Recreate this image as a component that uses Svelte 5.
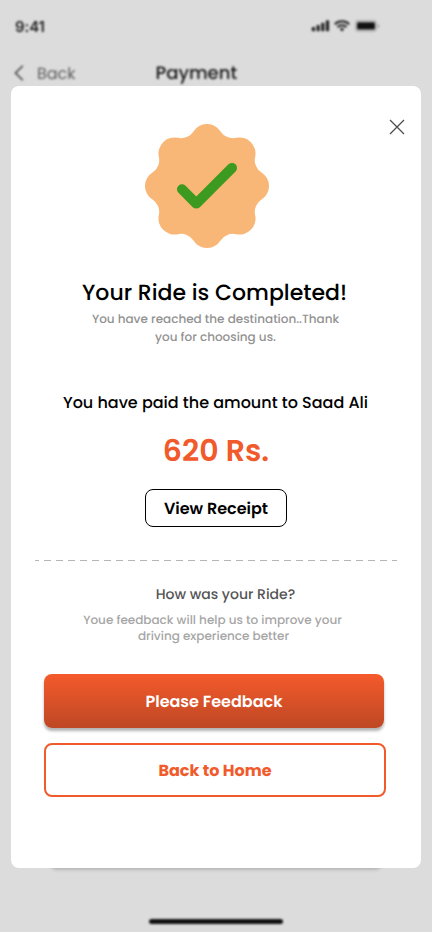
<script>
  const CENTER = 62;
  const TIP = 13.94;
  const JOIN = 56.2;

  function point(radius, degrees) {
    const a = (degrees * Math.PI) / 180;
    return `${(CENTER + radius * Math.sin(a)).toFixed(2)} ${(CENTER - radius * Math.cos(a)).toFixed(2)}`;
  }

  // Eight convex lobes joined by concave arcs.
  let badge = `M${point(JOIN, -TIP)}`;
  for (let i = 0; i < 8; i++) {
    badge += `A16 16 0 0 1 ${point(JOIN, i * 45 + TIP)}`;
    badge += `A14.5 14.5 0 0 0 ${point(JOIN, (i + 1) * 45 - TIP)}`;
  }
  badge += 'Z';
</script>

<main class="screen">
  <div class="backdrop">
    <div class="status">
      <span class="time">9:41</span>
      <svg class="signals" width="70" height="14" viewBox="0 0 70 14">
        <g fill="#202020">
          <rect x="0.8" y="7" width="3.2" height="4.2" rx="1" />
          <rect x="5.5" y="5" width="3.2" height="6.2" rx="1" />
          <rect x="10.2" y="2.7" width="3.2" height="8.5" rx="1" />
          <rect x="14.9" y="0.2" width="3.2" height="11" rx="1" />
        </g>
        <g fill="none" stroke="#202020" stroke-width="2">
          <path d="M23.8 4.2a10.3 10.3 0 0 1 14.4 0" />
          <path d="M26.4 7a6.6 6.6 0 0 1 9.2 0" />
        </g>
        <path d="M28.7 9a3.4 3.4 0 0 1 4.6 0L31 11.4Z" fill="#202020" />
        <rect x="44.5" y="0.7" width="21" height="10.4" rx="2.8" fill="none" stroke="#202020" stroke-opacity=".35" />
        <rect x="46" y="2.2" width="18" height="7.4" rx="1.4" fill="#111" />
        <path d="M67 4v4c1.6-.7 1.6-3.3 0-4" fill="#202020" fill-opacity=".4" />
      </svg>
    </div>
    <div class="nav">
      <svg width="10" height="16" viewBox="0 0 10 16" fill="none" stroke="#444" stroke-width="1.6">
        <path d="M8.8 .8 1.5 8l7.3 7.2" />
      </svg>
      <span class="back">Back</span>
      <span class="title">Payment</span>
    </div>
    <div class="under-button"></div>
    <div class="home-bar"></div>
  </div>

  <section class="card">
    <button class="close" aria-label="Close">
      <svg width="16" height="16" viewBox="0 0 16 16" fill="none" stroke="#4c4c4c" stroke-width="1.3">
        <path d="M1 1l14 14M15 1 1 15" />
      </svg>
    </button>
    <svg class="badge" width="124" height="124" viewBox="0 0 124 124">
      <path d={badge} fill="#f9b777" />
      <path d="M37 65.3 51.3 79.6 87 43.9" fill="none" stroke="#3c9a20" stroke-width="10" stroke-linecap="round" stroke-linejoin="round" />
    </svg>
    <h1>Your Ride is Completed!</h1>
    <p class="sub">You have reached the destination..Thank<br />you for choosing us.</p>
    <p class="paid">You have paid the amount to Saad Ali</p>
    <p class="amount">620 Rs.</p>
    <button class="receipt">View Receipt</button>
    <svg class="divider" width="362" height="1" viewBox="0 0 362 1">
      <path d="M0 .5h362" stroke="#b5b5b5" stroke-dasharray="7 5" stroke-dashoffset="3" />
    </svg>
    <h2>How was your Ride?</h2>
    <p class="hint">Youe feedback will help us to improve your<br /><span class="last">driving experience better</span></p>
    <button class="primary">Please Feedback</button>
    <button class="outline">Back to Home</button>
  </section>
</main>

<style>
  .screen {
    position: relative;
    width: 432px;
    height: 932px;
    overflow: hidden;
    background: #dcdcdc;
    font-family: Poppins, Inter, 'Noto Sans', sans-serif;
    text-rendering: geometricPrecision;
  }
  h1, h2, p { margin: 0; font-weight: 500; white-space: nowrap; }
  button { font-family: inherit; padding: 0; box-sizing: border-box; white-space: nowrap; text-rendering: inherit; }
  svg { display: block; flex: none; }

  .backdrop { position: absolute; inset: 0; filter: blur(0.8px); }
  .status {
    display: flex;
    justify-content: space-between;
    align-items: flex-start;
    padding: 16px 51px 0 15px;
    height: 46px;
    box-sizing: border-box;
  }
  .time { font: 600 15px/22px Inter, sans-serif; color: #222; letter-spacing: -0.1px; }
  .signals { margin-top: 4px; }
  .nav { display: flex; align-items: center; height: 54px; padding-left: 14px; }
  .back { margin-left: 13px; width: 118.5px; font-size: 16px; color: #5c5c5c; }
  .title { font-size: 18px; font-weight: 500; color: #181818; }
  .under-button {
    position: absolute;
    left: 49px;
    top: 820px;
    width: 334px;
    height: 49px;
    border-radius: 8px;
    background: #b4b4b4;
    box-shadow: 0 1px 3px rgba(0, 0, 0, 0.15);
  }
  .home-bar {
    position: absolute;
    left: 149px;
    bottom: 8px;
    width: 134px;
    height: 5px;
    border-radius: 3px;
    background: #111;
  }

  .card {
    position: absolute;
    left: 11px;
    top: 86px;
    width: 410px;
    height: 782px;
    border-radius: 8px;
    background: #fff;
    display: flex;
    flex-direction: column;
    align-items: center;
    text-align: center;
  }
  .close {
    position: absolute;
    right: 16px;
    top: 33px;
    border: 0;
    background: none;
  }
  .badge { margin: 38px 18px 0 0; }
  h1 { margin: 30px 3px 0 0; font-size: 22px; line-height: 30px; color: #000; }
  .sub { margin: 3px 1px 0 0; font-size: 12px; line-height: 18px; color: #929292; }
  .paid { margin: 44px 1px 0 0; font-size: 16px; line-height: 24px; color: #000; }
  .amount { margin-top: 16px; font-size: 30px; line-height: 40px; font-weight: 600; color: #f15a2b; }
  .receipt {
    margin-top: 18px;
    width: 142px;
    height: 38px;
    border: 1px solid #000;
    border-radius: 8px;
    background: #fff;
    color: #000;
    font-size: 16px;
    font-weight: 600;
  }
  .divider { margin-top: 33px; }
  h2 { margin: 23px 0 0 19px; font-size: 14px; line-height: 20px; color: #555; }
  .hint { margin: 9px 7px 0 0; font-size: 12px; line-height: 16px; color: #a6a6a6; }
  .last { padding-left: 2px; }
  .primary {
    margin: 29px 4px 0 0;
    width: 340px;
    height: 54px;
    border: 0;
    border-radius: 8px;
    background: linear-gradient(#f55a2c, #bd4824);
    box-shadow: 0 3px 3px rgba(0, 0, 0, 0.3);
    color: #fff;
    font-size: 16px;
    font-weight: 600;
  }
  .outline {
    margin: 15px 2px 0 0;
    width: 342px;
    height: 54px;
    border: 2px solid #f15a2b;
    border-radius: 8px;
    background: #fff;
    color: #f15a2b;
    font-size: 16px;
    font-weight: 700;
  }
</style>
